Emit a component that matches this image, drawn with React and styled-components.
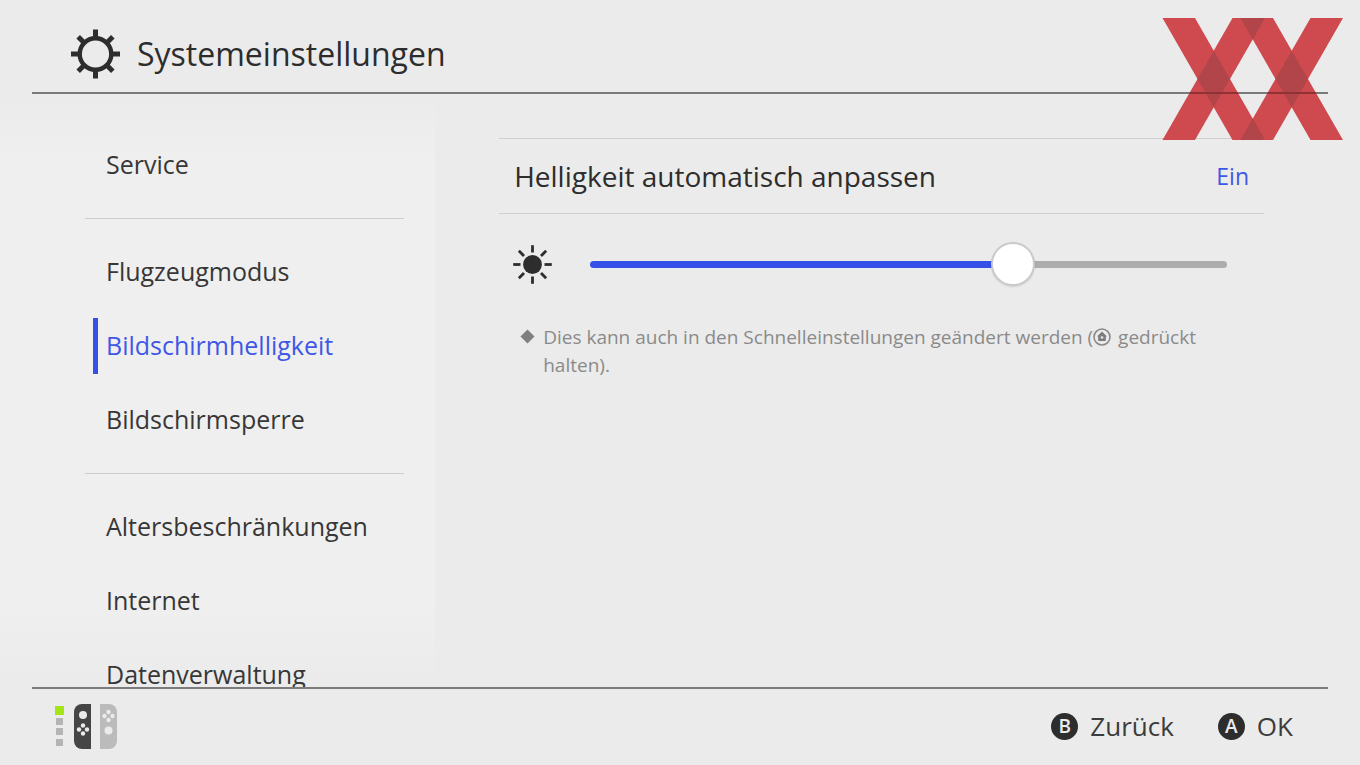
import React, { useState } from 'react';
import styled, { createGlobalStyle } from 'styled-components';

const GlobalStyle = createGlobalStyle`
	* {
		box-sizing: border-box;
	}
	body {
		margin: 0;
		background: #ebebeb;
		color: #2d2d2d;
		font-family: "Open Sans", "Noto Sans", sans-serif;
	}
	button {
		font: inherit;
		color: inherit;
		background: none;
		border: none;
		padding: 0;
		cursor: pointer;
	}
`;

const Screen = styled.div`
	height: 100vh;
	display: grid;
	grid-template-rows: auto minmax(0, 1fr) auto;
	position: relative;
	overflow: hidden;
`;

const Header = styled.header`
	margin: 0 32px;
	padding: 16px 38px 0;
	height: 94px;
	display: flex;
	align-items: center;
	gap: 16px;
	border-bottom: 2px solid #7b7b7b;
`;

const Title = styled.h1`
	margin: 0;
	font-size: 32px;
	line-height: 44px;
	font-weight: 400;
`;

const Body = styled.div`
	display: grid;
	grid-template-columns: 32% 1fr;
`;

const Sidebar = styled.nav`
	height: 100%;
	overflow: hidden;
	padding: 34px 31px 0 85px;
	background: linear-gradient(#ebebeb, #efefef 64px, #efefef calc(100% - 80px), #ebebeb);
`;

const Group = styled.ul`
	margin: 0;
	padding: 0 0 0 8px;
	list-style: none;
`;

const Divider = styled.hr`
	margin: 16px 0;
	border: none;
	height: 1px;
	background: #cdcdcd;
`;

const Item = styled.li`
	height: 74px;
	display: flex;
	align-items: center;
`;

const ItemButton = styled.button`
	height: 56px;
	width: 100%;
	padding: 0 0 2px 8px;
	text-align: left;
	font-size: 25px;
	border-left: 5px solid ${props => props.$active ? '#3550e8' : 'transparent'};
	color: ${props => props.$active ? '#3f57e6' : '#373737'};
`;

const Content = styled.main`
	padding: 44px 64px 0;
	margin-right: 32px;
`;

const SettingRow = styled.button`
	width: 100%;
	height: 76px;
	padding: 0 15px;
	display: flex;
	align-items: center;
	justify-content: space-between;
	border-top: 1px solid #cfcfcf;
	border-bottom: 1px solid #cfcfcf;
	font-size: 28px;
`;

const SettingValue = styled.span`
	font-size: 23px;
	color: #3f57e6;
`;

const SliderRow = styled.div`
	height: 100px;
	padding: 0 37px 0 14px;
	display: flex;
	align-items: center;
	gap: 37px;
`;

const Slider = styled.input`
	flex: 1;
	min-width: 0;
	height: 44px;
	margin: 0;
	appearance: none;
	background: none;
	&::-webkit-slider-runnable-track {
		height: 7px;
		border-radius: 4px;
		background: linear-gradient(to right, #3550e8 ${props => props.$fill}, #adadad ${props => props.$fill});
	}
	&::-webkit-slider-thumb {
		appearance: none;
		width: 44px;
		height: 44px;
		margin-top: -19px;
		border: 2px solid #cacaca;
		border-radius: 50%;
		background: white;
		box-shadow: 0 1px 2px rgba(0, 0, 0, 0.12);
	}
`;

const Note = styled.div`
	padding: 9px 16px 0 21px;
	display: flex;
	gap: 8px;
	font-size: 19px;
	line-height: 28px;
	color: #8a8a8a;
	p {
		margin: 0;
	}
	svg {
		flex: none;
	}
`;

const Bullet = styled.svg`
	margin-top: 6px;
`;

const HomeSvg = styled.svg`
	vertical-align: -2px;
	margin-right: 2px;
`;

const Footer = styled.footer`
	margin: 0 32px;
	padding: 0 35px 0 23px;
	height: 78px;
	display: flex;
	align-items: center;
	justify-content: space-between;
	border-top: 2px solid #7b7b7b;
`;

const Actions = styled.div`
	display: flex;
	gap: 44px;
	padding-bottom: 2px;
`;

const ActionButton = styled.button`
	display: flex;
	align-items: center;
	gap: 12px;
	font-size: 26px;
	color: #3c3c3c;
`;

const Key = styled.span`
	width: 27px;
	height: 27px;
	border-radius: 50%;
	background: #2d2d2d;
	color: #ebebeb;
	font-size: 19px;
	line-height: 27px;
	font-weight: 600;
	text-align: center;
`;

const Logo = styled.svg`
	position: absolute;
	top: 18px;
	right: 17px;
`;

const groups = [
	['Service'],
	['Flugzeugmodus', 'Bildschirmhelligkeit', 'Bildschirmsperre'],
	['Altersbeschränkungen', 'Internet', 'Datenverwaltung'],
];

const steps = 37;
const angles = [0, 45, 90, 135, 180, 225, 270, 315];

const GearIcon = () => (
	<svg width="51" height="51" viewBox="0 0 51 51" aria-hidden="true">
		<circle cx="25.5" cy="25" r="15.8" fill="none" stroke="#2d2d2d" strokeWidth="4.4" />
		{angles.map(a => (
			<path key={a} d="M25.5 9V0.5" stroke="#2d2d2d" strokeWidth="5" transform={`rotate(${a} 25.5 25)`} />
		))}
	</svg>
);

const SunIcon = () => (
	<svg width="40" height="40" viewBox="0 0 40 40" aria-hidden="true">
		<circle cx="19.5" cy="20.5" r="9.4" fill="#2d2d2d" />
		{angles.map(a => (
			<path key={a} d="M19.5 8.5V1.2" stroke="#2d2d2d" strokeWidth="2.8" transform={`rotate(${a} 19.5 20.5)`} />
		))}
	</svg>
);

const HomeIcon = () => (
	<HomeSvg width="18" height="18" viewBox="0 0 18 18" role="img" aria-label="HOME-Taste">
		<circle cx="9" cy="9" r="8" fill="none" stroke="#8a8a8a" strokeWidth="1.6" />
		<path d="M9 3.6L14 8.4H12.8V13H5.2V8.4H4Z" fill="#7c7c7c" />
		<path d="M7.8 8.4h2.4v2.2H7.8z" fill="#ebebeb" />
	</HomeSvg>
);

const ControllerIcon = () => (
	<svg width="62" height="46" viewBox="0 0 62 46" role="img" aria-label="Controller 1">
		<rect x="0" y="2" width="9" height="9" fill="#a5e516" />
		<path d="M1 14h7v7H1zM1 24h7v7H1zM1 35h7v7H1z" fill="#b4b4b4" />
		<path d="M36 0V45H27A8 8 0 0 1 19 37V8A8 8 0 0 1 27 0Z" fill="#454545" />
		<path d="M45 0V45H54A8 8 0 0 0 62 37V8A8 8 0 0 0 54 0Z" fill="#bbbbbb" />
		<g fill="#ebebeb">
			<circle cx="28" cy="11" r="4" />
			<circle cx="28" cy="21.5" r="2.2" />
			<circle cx="28" cy="29.5" r="2.2" />
			<circle cx="24" cy="25.5" r="2.2" />
			<circle cx="32" cy="25.5" r="2.2" />
			<circle cx="53.5" cy="26.5" r="4" />
			<circle cx="53.5" cy="8" r="2.2" />
			<circle cx="53.5" cy="16" r="2.2" />
			<circle cx="49.5" cy="12" r="2.2" />
			<circle cx="57.5" cy="12" r="2.2" />
		</g>
	</svg>
);

const XXLogo = () => (
	<Logo width="181" height="122" viewBox="0 0 181 122" aria-hidden="true">
		<g fill="#cf4a4e">
			<path d="M0.5 0H33L103 122H70.5Z" />
			<path d="M70.5 0H103L33 122H0.5Z" />
			<path d="M78.5 0H111L181 122H148.5Z" />
			<path d="M148.5 0H181L111 122H78.5Z" />
		</g>
		<g fill="#b24549">
			<path d="M51.75 32.7L68 61L51.75 89.3L35.5 61Z" />
			<path d="M129.75 32.7L146 61L129.75 89.3L113.5 61Z" />
			<path d="M78.5 0H103L90.75 21.4Z" />
			<path d="M78.5 122H103L90.75 100.6Z" />
		</g>
		<path d="M28 74H75.5L76.6 76H27ZM106 74H153.5L154.6 76H105Z" fill="#8f3135" />
	</Logo>
);

const App = () => {
	const [selected, setSelected] = useState('Bildschirmhelligkeit');
	const [auto, setAuto] = useState(true);
	const [brightness, setBrightness] = useState(25);

	return (
	<Screen>
		<GlobalStyle />
		<Header>
			<GearIcon />
			<Title>Systemeinstellungen</Title>
		</Header>
		<Body>
			<Sidebar>
				{groups.map((items, i) => (
					<React.Fragment key={items[0]}>
						{i > 0 && <Divider />}
						<Group>
							{items.map(item => (
								<Item key={item}>
									<ItemButton $active={item === selected} onClick={() => setSelected(item)}>{item}</ItemButton>
								</Item>
							))}
						</Group>
					</React.Fragment>
				))}
			</Sidebar>
			<Content>
				<SettingRow onClick={() => setAuto(!auto)}>
					Helligkeit automatisch anpassen
					<SettingValue>{auto ? 'Ein' : 'Aus'}</SettingValue>
				</SettingRow>
				<SliderRow>
					<SunIcon />
					<Slider
						type="range"
						aria-label="Bildschirmhelligkeit"
						min="0"
						max={steps}
						value={brightness}
						$fill={`${100 * brightness / steps}%`}
						onChange={e => setBrightness(Number(e.target.value))}
					/>
				</SliderRow>
				<Note>
					<Bullet width="15" height="15" viewBox="0 0 15 15" aria-hidden="true">
						<path d="M7.5 0.5L14.5 7.5L7.5 14.5L0.5 7.5Z" fill="#808080" />
					</Bullet>
					<p>Dies kann auch in den Schnelleinstellungen geändert werden (<HomeIcon /> gedrückt halten).</p>
				</Note>
			</Content>
		</Body>
		<Footer>
			<ControllerIcon />
			<Actions>
				<ActionButton><Key>B</Key>Zurück</ActionButton>
				<ActionButton><Key>A</Key>OK</ActionButton>
			</Actions>
		</Footer>
		<XXLogo />
	</Screen>
	);
}

export default App;
